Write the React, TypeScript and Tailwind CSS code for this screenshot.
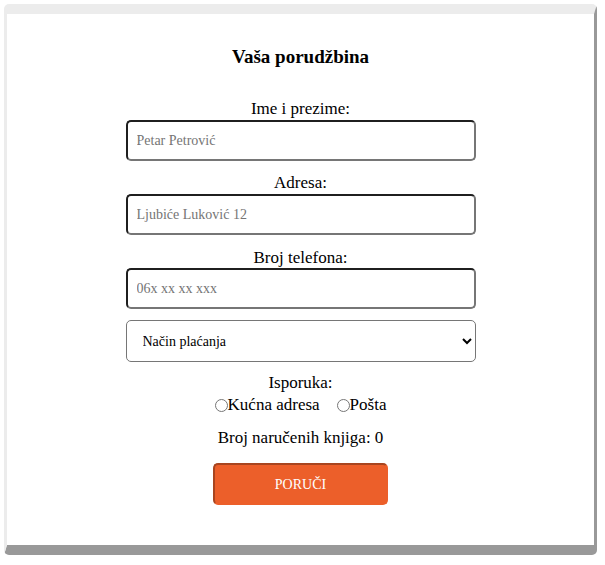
import { useState } from "react";

const inputCls =
  "w-[350px] h-[41px] rounded-[5px] border-2 border-t-[#1f1f1f] border-l-[#1f1f1f] border-r-[#767676] border-b-[#767676] bg-white px-[9px] text-[14px] text-black placeholder:text-[#757575] outline-none";

const App = () => {
  const [ime, setIme] = useState("");
  const [adresa, setAdresa] = useState("");
  const [telefon, setTelefon] = useState("");
  const [placanje, setPlacanje] = useState("");
  const [isporuka, setIsporuka] = useState("");
  const brojKnjiga = 0;

  return (
    <div className="min-h-screen bg-white pt-1 pl-1 pr-2 font-['Liberation_Serif',serif] text-black">
      <div className="rounded-[5px] border-t-[10px] border-b-[10px] border-l-[3px] border-r-[3px] border-t-[#ececec] border-l-[#ececec] border-r-[#999999] border-b-[#999999] bg-white pt-[31px] pb-[40px]">
        <div className="flex flex-col items-center">
          <h2 className="text-[19px] font-bold leading-6">Vaša porudžbina</h2>

          <label className="mt-[30px] text-[17px] leading-5" htmlFor="ime">Ime i prezime:</label>
          <input
            id="ime"
            className={inputCls + " mt-px"}
            placeholder="Petar Petrović"
            value={ime}
            onChange={(e) => setIme(e.target.value)}
          />

          <label className="mt-[12px] text-[17px] leading-5" htmlFor="adresa">Adresa:</label>
          <input
            id="adresa"
            className={inputCls + " mt-px"}
            placeholder="Ljubiće Luković 12"
            value={adresa}
            onChange={(e) => setAdresa(e.target.value)}
          />

          <label className="mt-[13px] text-[17px] leading-5" htmlFor="telefon">Broj telefona:</label>
          <input
            id="telefon"
            className={inputCls}
            placeholder="06x xx xx xxx"
            value={telefon}
            onChange={(e) => setTelefon(e.target.value)}
          />

          <select
            className="mt-[11px] h-[42px] w-[350px] rounded-[5px] border border-[#767676] bg-white pl-[12px] pr-1 text-[14px] text-black"
            value={placanje}
            onChange={(e) => setPlacanje(e.target.value)}
          >
            <option value="">Način plaćanja</option>
            <option value="pouzece">Pouzećem</option>
            <option value="kartica">Karticom</option>
          </select>

          <div className="mt-[11px] text-[17px] leading-5">Isporuka:</div>
          <div className="mt-[2px] flex items-center text-[17px] leading-5">
            <label className="flex items-center">
              <input
                type="radio"
                name="isporuka"
                className="m-0 h-[13px] w-[13px]"
                checked={isporuka === "adresa"}
                onChange={() => setIsporuka("adresa")}
              />
              Kućna adresa
            </label>
            <label className="ml-[17px] flex items-center">
              <input
                type="radio"
                name="isporuka"
                className="m-0 h-[13px] w-[13px]"
                checked={isporuka === "posta"}
                onChange={() => setIsporuka("posta")}
              />
              Pošta
            </label>
          </div>

          <p className="mt-[13px] text-[17px] leading-5">Broj naručenih knjiga: {brojKnjiga}</p>

          <button className="mt-[15px] h-[42px] w-[175px] rounded-[5px] border-2 border-t-[#a8451f] border-l-[#a8451f] border-r-[#ec5f2a] border-b-[#ec5f2a] bg-[#ec5f2a] text-[14px] text-white uppercase">
            Poruči
          </button>
        </div>
      </div>
    </div>
  );
};

export default App;
